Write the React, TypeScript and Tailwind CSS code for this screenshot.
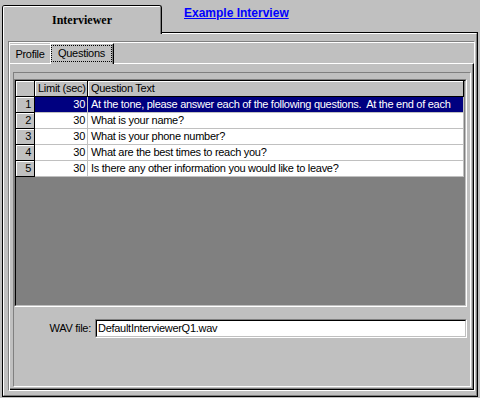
const questions = [
  { n: 1, limit: 30, text: "At the tone, please answer each of the following questions.  At the end of each" },
  { n: 2, limit: 30, text: "What is your name?" },
  { n: 3, limit: 30, text: "What is your phone number?" },
  { n: 4, limit: 30, text: "What are the best times to reach you?" },
  { n: 5, limit: 30, text: "Is there any other information you would like to leave?" },
];

// fixed (header / indicator) cells and plain data cells of the string grid
const fixedCell = "bg-[#c0c0c0] border-r border-b border-black shadow-[inset_1px_1px_0_#fff] whitespace-nowrap overflow-hidden";
const dataCell = "border-r border-b border-[#c0c0c0] whitespace-nowrap overflow-hidden";

function QuestionGrid() {
  return (
    <div className="w-[453px] h-[228px] border border-t-[#808080] border-l-[#808080] border-r-white border-b-white">
      <div className="h-full border border-t-black border-l-black border-r-[#c0c0c0] border-b-[#c0c0c0] bg-[#808080] overflow-hidden">
        <div className="flex h-[16px] leading-[15px]">
          <div className={`${fixedCell} w-[19px]`} />
          <div className={`${fixedCell} w-[53px] pl-[3px]`}>Limit (sec)</div>
          <div className={`${fixedCell} w-[376px] pl-[3px]`}>Question Text</div>
        </div>
        {questions.map((q) => {
          const selected = q.n === 1;
          return (
            <div key={q.n} className="flex h-[16px] leading-[15px]">
              <div className={`${fixedCell} w-[19px] text-right pr-[3px]`}>{q.n}</div>
              <div className={`${dataCell} w-[53px] text-right pr-[2px] ${selected ? "bg-[#000080] text-white" : "bg-white"}`}>
                {q.limit}
              </div>
              <div className={`${dataCell} w-[376px] pl-[3px] whitespace-pre ${selected ? "bg-[#000080] text-white" : "bg-white"}`}>
                {q.text}
              </div>
            </div>
          );
        })}
      </div>
    </div>
  );
}

export default function App() {
  return (
    <div className="w-[480px] h-[398px] bg-[#c0c0c0] flex flex-col overflow-hidden text-[11px] tracking-[-0.28px] text-black font-['Liberation_Sans',Arial,sans-serif]">
      {/* top strip: page tab + link */}
      <div className="flex h-[32px] items-start">
        <div className="relative z-10 ml-[2px] mt-[5px] w-[160px] h-[29px] bg-[#c0c0c0] border-l border-t border-r border-black rounded-t-[3px]">
          <div className="h-full border-l border-t border-r border-t-white border-l-white border-r-[#808080] rounded-t-[2px] pt-[6px] text-center font-['Liberation_Serif',serif] font-bold text-[12px] leading-[14px] tracking-normal">
            Interviewer
          </div>
        </div>
        <a className="ml-[22px] mt-[6px] text-[12px] leading-[14px] font-bold tracking-normal text-[#0000ff] underline">
          Example Interview
        </a>
      </div>

      {/* page frame */}
      <div className="ml-[2px] w-[476px] h-[365px] border border-black">
        <div className="h-full border border-t-white border-l-white border-r-[#808080] border-b-[#808080] pl-[4px] pt-[7px]">
          {/* etched group */}
          <div className="w-[467px] h-[350px] border-t border-l border-[#808080] border-r border-b border-r-white border-b-white">
            <div className="h-full border-t border-l border-white flex flex-col">
              {/* inner tabs */}
              <div className="flex items-end h-[20px] ml-[-1px]">
                <div className="w-[41px] h-[19px] border-l border-t border-white rounded-tl-[2px] flex items-center justify-center pt-[1px]">
                  Profile
                </div>
                <div className="relative z-10 w-[64px] h-[21px] mb-[-1px] bg-[#c0c0c0] border-l border-t border-r border-l-white border-t-white border-r-black">
                  <div className="h-full border-r border-[#808080] pt-[1px] pb-[2px]">
                    <div className="h-full border border-dotted border-black flex items-center justify-center">
                      Questions
                    </div>
                  </div>
                </div>
              </div>
              {/* tab page */}
              <div className="w-[464px] h-[327px] border-t border-white border-r border-b border-r-black border-b-black">
                <div className="h-full border-r border-b border-[#808080] pl-[3px] pt-[8px]">
                  <div className="w-[458px] h-[315px] border border-t-[#808080] border-l-[#808080] border-r-white border-b-white">
                    <div className="pt-[6px]">
                      <QuestionGrid />
                      <div className="flex items-center mt-[12px] h-[19px]">
                        <div className="w-[77px] text-right">WAV file:</div>
                        <div className="ml-[4px] w-[372px] h-[19px] border border-t-[#808080] border-l-[#808080] border-r-white border-b-white">
                          <div className="h-full border border-t-black border-l-black border-r-[#c0c0c0] border-b-[#c0c0c0] bg-white pl-[1px] leading-[15px]">
                            DefaultInterviewerQ1.wav
                          </div>
                        </div>
                      </div>
                    </div>
                  </div>
                </div>
              </div>
            </div>
          </div>
        </div>
      </div>
    </div>
  );
}
